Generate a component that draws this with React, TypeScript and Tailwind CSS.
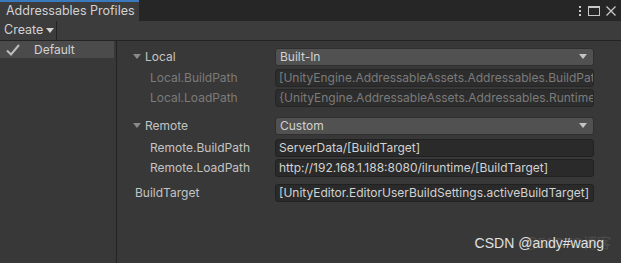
const FONT = { fontFamily: 'Inter, "Noto Sans", sans-serif' };

function Caret({ className = '' }: { className?: string }) {
  return (
    <svg width="8" height="6" viewBox="0 0 8 6" className={className}>
      <path d="M0 0 L8 0 L4 5 Z" fill="currentColor" />
    </svg>
  );
}

function Dropdown({ value }: { value: string }) {
  return (
    <div className="flex h-[18px] items-center justify-between rounded-[3px] border border-[#2f2f2f] bg-[#515151] pl-[4px] pr-[6px] text-[#d2d2d2]">
      <span>{value}</span>
      <Caret className="text-[#c4c4c4]" />
    </div>
  );
}

function Field({ value, disabled = false }: { value: string; disabled?: boolean }) {
  return (
    <div
      className={
        disabled
          ? 'flex h-[18px] items-center overflow-hidden whitespace-nowrap rounded-[3px] border border-[#262626] bg-[#2d2d2d] pl-[3px] text-[#7b7b7b]'
          : 'flex h-[18px] items-center overflow-hidden whitespace-nowrap rounded-[3px] border border-[#212121] bg-[#2a2a2a] pl-[3px] text-[#d2d2d2]'
      }
    >
      {value}
    </div>
  );
}

function Row({ label, children, className = '' }: { label: React.ReactNode; children: React.ReactNode; className?: string }) {
  return (
    <div className={`flex items-center ${className}`}>
      <div className="w-[142px] shrink-0">{label}</div>
      <div className="min-w-0 flex-1">{children}</div>
    </div>
  );
}

export default function App() {
  return (
    <div className="flex h-[263px] w-[621px] flex-col overflow-hidden bg-[#383838] text-[12px] leading-none" style={FONT}>
      {/* title tab bar */}
      <div className="flex h-[21px] shrink-0 items-stretch bg-[#262626]">
        <div className="flex w-[139px] items-center border-t-2 border-[#3a79bb] bg-[#3c3c3c] pl-[6px] text-[12.5px] text-[#d2d2d2]">
          Addressables Profiles
        </div>
        <div className="flex-1" />
        <div className="flex items-center gap-[6px] pr-[5px] text-[#c8c8c8]">
          <svg width="4" height="10" viewBox="0 0 4 10">
            <rect x="1" y="0" width="2" height="2" fill="currentColor" />
            <rect x="1" y="4" width="2" height="2" fill="currentColor" />
            <rect x="1" y="8" width="2" height="2" fill="currentColor" />
          </svg>
          <svg width="12" height="10" viewBox="0 0 12 10">
            <rect x="0.5" y="0.5" width="11" height="9" fill="none" stroke="currentColor" />
            <rect x="0" y="0" width="12" height="2" fill="currentColor" />
          </svg>
          <svg width="10" height="10" viewBox="0 0 10 10">
            <path d="M0.5 0.5 L9.5 9.5 M9.5 0.5 L0.5 9.5" stroke="currentColor" strokeWidth="1.3" />
          </svg>
        </div>
      </div>

      {/* toolbar */}
      <div className="flex h-[20px] shrink-0 items-stretch border-b border-[#232323] bg-[#3c3c3c]">
        <div className="flex w-[57px] items-center gap-[3px] border-r border-[#232323] pl-[4px] text-[12.5px] text-[#d2d2d2]">
          Create
          <Caret className="text-[#d2d2d2]" />
        </div>
      </div>

      <div className="flex min-h-0 flex-1">
        {/* profiles list */}
        <div className="w-[117px] shrink-0 border-r border-[#232323]">
          <div className="flex h-[17px] w-[114px] items-center bg-[#4b4b4b] text-[#d2d2d2]">
            <svg width="14" height="12" viewBox="0 0 14 12" className="ml-[6px] text-[#bdbdbd]">
              <path d="M1 6.5 L5 10.5 L13 1" fill="none" stroke="currentColor" strokeWidth="2" />
            </svg>
            <span className="ml-[14px]">Default</span>
          </div>
        </div>

        {/* profile settings */}
        <div className="relative min-w-0 flex-1 pl-[16px] pr-[27px] pt-[7px] text-[#c4c4c4]">
          <Row
            label={
              <span className="flex items-center gap-[4px]">
                <Caret className="text-[#8a8a8a]" />
                Local
              </span>
            }
          >
            <Dropdown value="Built-In" />
          </Row>
          <Row className="mt-[3px]" label={<span className="pl-[17px] text-[#7b7b7b]">Local.BuildPath</span>}>
            <Field disabled value="[UnityEngine.AddressableAssets.Addressables.BuildPath]" />
          </Row>
          <Row className="mt-[2px]" label={<span className="pl-[17px] text-[#7b7b7b]">Local.LoadPath</span>}>
            <Field disabled value="{UnityEngine.AddressableAssets.Addressables.RuntimePath}" />
          </Row>

          <Row
            className="mt-[10px]"
            label={
              <span className="flex items-center gap-[4px]">
                <Caret className="text-[#8a8a8a]" />
                Remote
              </span>
            }
          >
            <Dropdown value="Custom" />
          </Row>
          <Row className="mt-[4px]" label={<span className="pl-[17px]">Remote.BuildPath</span>}>
            <Field value="ServerData/[BuildTarget]" />
          </Row>
          <Row className="mt-[2px]" label={<span className="pl-[17px]">Remote.LoadPath</span>}>
            <Field value="http://192.168.1.188:8080/ilruntime/[BuildTarget]" />
          </Row>

          <Row className="mt-[7px]" label={<span className="pl-[2px]">BuildTarget</span>}>
            <Field value="[UnityEditor.EditorUserBuildSettings.activeBuildTarget]" />
          </Row>

          {/* watermark */}
          <div className="absolute bottom-[13px] right-[17px] text-[14px] text-[#e0e0e0]" style={{ fontFamily: '"Liberation Sans", Arial, sans-serif' }}>
            CSDN @andy#wang
          </div>
          <div className="absolute bottom-[13px] right-[10px] text-[14px] text-[#ffffff]/10" style={{ fontFamily: '"Liberation Sans", "Noto Sans CJK SC", sans-serif' }}>
            @51CTO博客
          </div>
        </div>
      </div>
    </div>
  );
}
